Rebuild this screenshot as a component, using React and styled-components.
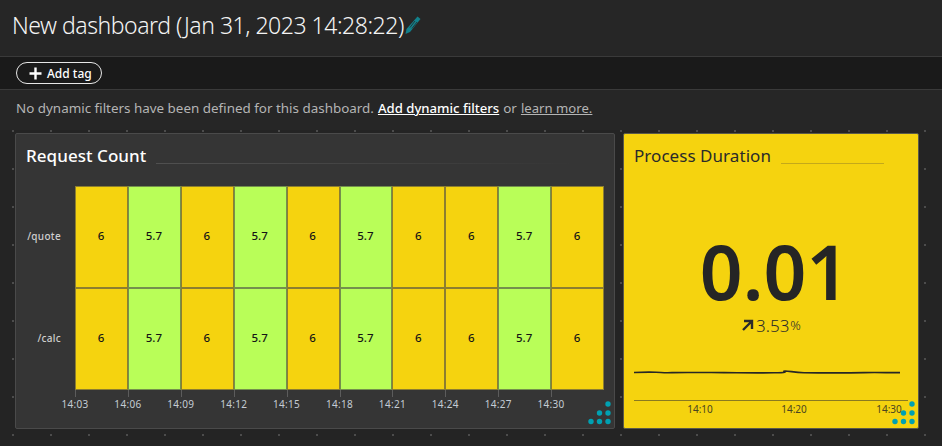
import React from "react";
import styled, { createGlobalStyle } from "styled-components";

const GlobalStyle = createGlobalStyle`
  html, body {
    margin: 0;
    padding: 0;
    background: #242424;
  }
  * {
    box-sizing: border-box;
  }
`;

const Page = styled.div`
  width: 942px;
  height: 446px;
  overflow: hidden;
  background: #262626;
  font-family: "Noto Sans", "Liberation Sans", sans-serif;
  color: #f4f4f4;
`;

const Header = styled.header`
  height: 57px;
  padding: 0 12px 6px;
  display: flex;
  align-items: center;
  border-bottom: 1px solid #3a3a3a;
`;

const Title = styled.h1`
  margin: 0;
  font-size: 23px;
  font-weight: 300;
  letter-spacing: -0.47px;
`;

const TagBar = styled.div`
  height: 33px;
  padding: 0 16px;
  display: flex;
  align-items: center;
  background: #1a1a1a;
  border-bottom: 1px solid #3a3a3a;
`;

const TagButton = styled.button`
  height: 22px;
  width: 86px;
  padding: 0 0 0 12px;
  display: flex;
  align-items: center;
  gap: 5px;
  background: transparent;
  border: 1px solid #e6e6e6;
  border-radius: 11px;
  color: #fff;
  font-family: inherit;
  font-size: 12px;
  font-weight: 500;
`;

const FilterBar = styled.p`
  margin: 0;
  height: 40px;
  padding: 0 16px 4px;
  display: flex;
  align-items: center;
  gap: 4px;
  font-size: 13.42px;
  color: #b4b4b4;
`;

const FilterLink = styled.a`
  color: ${(p) => (p.$strong ? "#fff" : "#b4b4b4")};
  font-size: 13.15px;
  font-weight: ${(p) => (p.$strong ? 500 : 400)};
  text-decoration: underline;
`;

const Canvas = styled.main`
  height: 316px;
  padding: 3px 0 0 15px;
  display: flex;
  align-items: flex-start;
  gap: 8px;
  background-color: #242424;
  background-image: radial-gradient(circle at 13px 1px, #4c4c4c 1px, transparent 1.4px);
  background-size: 38px 38px;
`;

const Card = styled.section`
  position: relative;
  width: ${(p) => p.$width}px;
  height: 296px;
  padding: 8px 10px 0;
  border: 1px solid ${(p) => (p.$accent ? "#5a5a4a" : "#4a4a4a")};
  border-radius: 2px;
  background: ${(p) => (p.$accent ? "#f5d30f" : "#353535")};
  color: ${(p) => (p.$accent ? "#2a2a2a" : "#fff")};
`;

const CardHead = styled.div`
  display: flex;
  align-items: flex-end;
  gap: 10px;
  height: 26px;
`;

const CardTitle = styled.h2`
  margin: 0;
  font-size: 17px;
  font-weight: ${(p) => (p.$light ? 400 : 500)};
  line-height: 24px;
  letter-spacing: 0.05px;
  white-space: nowrap;
`;

const HeadRule = styled.span`
  display: block;
  width: ${(p) => p.$width}px;
  height: 1px;
  margin-bottom: 4px;
  background: ${(p) => (p.$fade ? `linear-gradient(to right, ${p.$color}, transparent)` : p.$color)};
`;

const HeatBody = styled.div`
  margin-top: 18px;
  display: grid;
  grid-template-columns: 49px 529px;
  grid-template-rows: 204px 40px;
`;

const RowLabels = styled.div`
  display: grid;
  grid-template-rows: 1fr 1fr;
  padding-right: 14px;
`;

const RowLabel = styled.div`
  padding-top: 43px;
  text-align: right;
  font-size: 10px;
  font-weight: 500;
  letter-spacing: 0.3px;
  color: #cfcfcf;
`;

const Heatmap = styled.div`
  display: grid;
  grid-template-columns: repeat(10, 1fr);
  grid-template-rows: 1fr 1fr;
`;

const HeatCell = styled.div`
  display: flex;
  align-items: center;
  justify-content: center;
  background: ${(p) => (p.$hot ? "#f5d30f" : "#b9fe58")};
  border: 1px solid rgba(70, 70, 70, 0.6);
  color: #151515;
  font-size: 11.5px;
  font-weight: 500;
  padding: 0 1px 3px 0;
`;

const TimeAxis = styled.div`
  grid-column: 2;
  display: grid;
  grid-template-columns: repeat(10, 1fr);
`;

const TimeTick = styled.div`
  height: 7px;
  border-left: 1px solid #5c5c5c;
`;

const TimeLabel = styled.span`
  display: block;
  width: 40px;
  margin: 7px 0 0 -21px;
  text-align: center;
  font-size: 10px;
  letter-spacing: 0.3px;
  color: #c4ccd4;
`;

const BigValue = styled.div`
  margin-top: 61px;
  padding-left: 7px;
  text-align: center;
  font-size: 75px;
  line-height: 85px;
  font-weight: 600;
  color: #252525;
`;

const Delta = styled.div`
  display: flex;
  align-items: center;
  justify-content: center;
  gap: 1px;
  height: 22px;
  font-size: 17px;
  font-weight: 300;
  color: #2a2a2a;
`;

const DeltaUnit = styled.span`
  font-size: 13px;
`;

const Spark = styled.svg`
  display: block;
  margin-top: 33px;
`;

const SparkAxis = styled.div`
  width: 274px;
  height: 15px;
  margin-top: 25px;
  border-top: 1px solid #8a7a20;
  position: relative;
`;

const SparkLabel = styled.span`
  position: absolute;
  top: 1px;
  left: ${(p) => p.$left}px;
  width: 40px;
  text-align: center;
  font-size: 10px;
  color: #4a4420;
`;

const Logo = styled.svg`
  position: absolute;
  right: 1px;
  bottom: 0;
`;

const cols = [6, 5.7, 6, 5.7, 6, 5.7, 6, 6, 5.7, 6];
const times = ["14:03", "14:06", "14:09", "14:12", "14:15", "14:18", "14:21", "14:24", "14:27", "14:30"];
const rows = ["/quote", "/calc"];

const Dots = () => (
  <Logo width="26" height="28" viewBox="0 0 26 28" fill="#00a1b2">
    {[[21, 4], [12.5, 13], [21, 13], [4, 21.5], [12.5, 21.5], [21, 21.5]].map(([x, y]) => (
      <circle key={`${x}-${y}`} cx={x} cy={y} r="2.7" />
    ))}
  </Logo>
);

const App = () => (
  <Page>
    <GlobalStyle />
    <Header>
      <Title>New dashboard (Jan 31, 2023 14:28:22)</Title>
      <svg width="18" height="20" viewBox="0 0 18 20" fill="#12808b">
        <path d="M13.5 1.5 L16.5 4 L6 17 L1.5 19 L2.5 14 Z" />
        <path d="M11 6 L6 12.5 M13 7 L8 13.5" stroke="#262626" strokeWidth="0.8" />
      </svg>
    </Header>
    <TagBar>
      <TagButton>
        <svg width="13" height="13" viewBox="0 0 13 13">
          <path d="M6.5 0.5v12M0.5 6.5h12" stroke="#fff" strokeWidth="2.4" />
        </svg>
        Add tag
      </TagButton>
    </TagBar>
    <FilterBar>
      No dynamic filters have been defined for this dashboard.
      <FilterLink $strong>Add dynamic filters</FilterLink>
      or
      <FilterLink>learn more.</FilterLink>
    </FilterBar>
    <Canvas>
      <Card $width={600}>
        <CardHead>
          <CardTitle>Request Count</CardTitle>
          <HeadRule $width={420} $color="#505050" $fade />
        </CardHead>
        <HeatBody>
          <RowLabels>
            {rows.map((r) => (
              <RowLabel key={r}>{r}</RowLabel>
            ))}
          </RowLabels>
          <Heatmap>
            {rows.map((r) =>
              cols.map((v, i) => (
                <HeatCell key={`${r}-${i}`} $hot={v === 6}>
                  {v}
                </HeatCell>
              ))
            )}
          </Heatmap>
          <TimeAxis>
            {times.map((t) => (
              <TimeTick key={t}>
                <TimeLabel>{t}</TimeLabel>
              </TimeTick>
            ))}
          </TimeAxis>
        </HeatBody>
        <Dots />
      </Card>
      <Card $width={296} $accent>
        <CardHead>
          <CardTitle $light>Process Duration</CardTitle>
          <HeadRule $width={103} $color="#c4a91a" />
        </CardHead>
        <BigValue>0.01</BigValue>
        <Delta>
          <svg width="14" height="12" viewBox="0 0 14 12">
            <path d="M3 2h8v8M11 2L2 11" fill="none" stroke="#2a2a2a" strokeWidth="2.4" />
          </svg>
          3.53<DeltaUnit>%</DeltaUnit>
        </Delta>
        <Spark width="266" height="6" viewBox="0 0 266 6">
          <path
            d="M0 3.5 C10 3 16 3 22 3.2 S 30 4 38 3.6 S 80 3.6 90 3.6 S 120 4 140 3.8 S 146 2 151 2 S 160 3.6 170 3.8 S 210 3.8 230 3.6 S 255 3.8 266 3.6"
            fill="none"
            stroke="#262626"
            strokeWidth="1.6"
          />
        </Spark>
        <SparkAxis>
          <SparkLabel $left={46}>14:10</SparkLabel>
          <SparkLabel $left={140}>14:20</SparkLabel>
          <SparkLabel $left={235}>14:30</SparkLabel>
        </SparkAxis>
        <Dots />
      </Card>
    </Canvas>
  </Page>
);

export default App;
